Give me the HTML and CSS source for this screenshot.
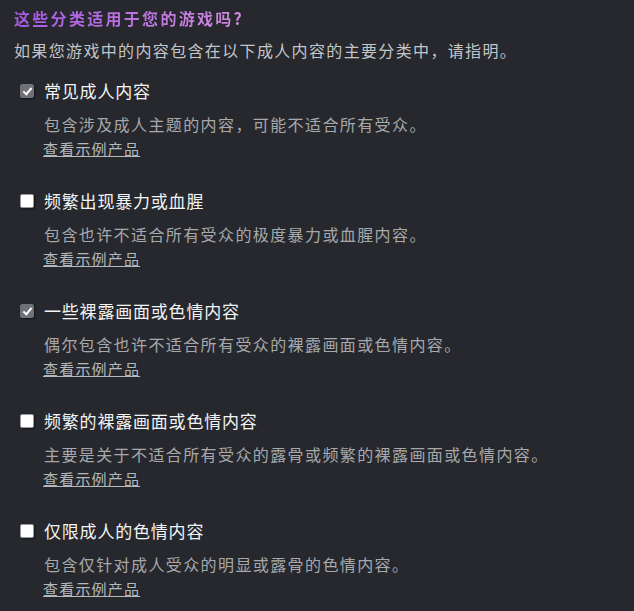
FILE: index.html
```html
<!DOCTYPE html>
<html lang="zh-CN">
<head>
  <meta charset="UTF-8" />
  <meta name="viewport" content="width=device-width, initial-scale=1.0"/>
  <title>内容分类</title>
  <link rel="stylesheet" href="styles.css">
</head>
<body>

  <div class="container">
    <h2 class="title">这些分类适用于您的游戏吗?</h2>
    <p class="intro">如果您游戏中的内容包含在以下成人内容的主要分类中，请指明。</p>

    <div class="option">
      <label class="option-head">
        <input type="checkbox" checked />
        <span class="option-name">常见成人内容</span>
      </label>
      <div class="option-desc">包含涉及成人主题的内容，可能不适合所有受众。</div>
      <a href="#" class="option-link">查看示例产品</a>
    </div>

    <div class="option">
      <label class="option-head">
        <input type="checkbox" />
        <span class="option-name">频繁出现暴力或血腥</span>
      </label>
      <div class="option-desc">包含也许不适合所有受众的极度暴力或血腥内容。</div>
      <a href="#" class="option-link">查看示例产品</a>
    </div>

    <div class="option">
      <label class="option-head">
        <input type="checkbox" checked />
        <span class="option-name">一些裸露画面或色情内容</span>
      </label>
      <div class="option-desc">偶尔包含也许不适合所有受众的裸露画面或色情内容。</div>
      <a href="#" class="option-link">查看示例产品</a>
    </div>

    <div class="option">
      <label class="option-head">
        <input type="checkbox" />
        <span class="option-name">频繁的裸露画面或色情内容</span>
      </label>
      <div class="option-desc">主要是关于不适合所有受众的露骨或频繁的裸露画面或色情内容。</div>
      <a href="#" class="option-link">查看示例产品</a>
    </div>

    <div class="option">
      <label class="option-head">
        <input type="checkbox" />
        <span class="option-name">仅限成人的色情内容</span>
      </label>
      <div class="option-desc">包含仅针对成人受众的明显或露骨的色情内容。</div>
      <a href="#" class="option-link">查看示例产品</a>
    </div>
  </div>

</body>
</html>
```

FILE: styles.css
```css
body {
  font-family: "Noto Sans CJK SC", "Noto Sans", sans-serif;
  background-color: #26282d;
  margin: 0;
  padding: 0;
}

.container {
  padding: 6px 14px 0;
}

.title {
  margin: 0;
  font-size: 16px;
  font-weight: bold;
  letter-spacing: 2.3px;
  line-height: 22px;
  background: linear-gradient(90deg, #a659e4, #d08ce0);
  -webkit-background-clip: text;
  background-clip: text;
  color: transparent;
  display: inline-block;
}

.intro {
  margin: 8px 0 17px;
  font-size: 16px;
  letter-spacing: 1.35px;
  line-height: 24px;
  color: #c3c5c9;
}

.option {
  margin-bottom: 29px;
}

.option-head {
  display: flex;
  align-items: center;
  gap: 10px;
  padding-left: 6px;
  cursor: pointer;
}

.option-head input {
  appearance: none;
  -webkit-appearance: none;
  width: 14px;
  height: 14px;
  margin: 0;
  border-radius: 2px;
  background-color: #fff;
  border: 1px solid #9a9ca0;
  box-shadow: 1px 1px 2px rgba(0, 0, 0, 0.5);
  box-sizing: border-box;
  position: relative;
  flex-shrink: 0;
}

.option-head input:checked {
  background-color: #707176;
  border-color: #707176;
}

.option-head input:checked::after {
  content: "";
  position: absolute;
  left: 4px;
  top: 1px;
  width: 3px;
  height: 7px;
  border: solid #fff;
  border-width: 0 2px 2px 0;
  transform: rotate(40deg);
}

.option-name {
  font-size: 17px;
  letter-spacing: 0.8px;
  line-height: 24px;
  color: #f2f3f4;
}

.option-desc {
  margin: 9px 0 0 30px;
  font-size: 16px;
  letter-spacing: 1.4px;
  line-height: 24px;
  color: #a6a8ac;
}

.option-link {
  display: inline-block;
  margin-left: 29px;
  font-size: 15px;
  letter-spacing: 1.2px;
  line-height: 22px;
  color: #b5b8bc;
}
```
